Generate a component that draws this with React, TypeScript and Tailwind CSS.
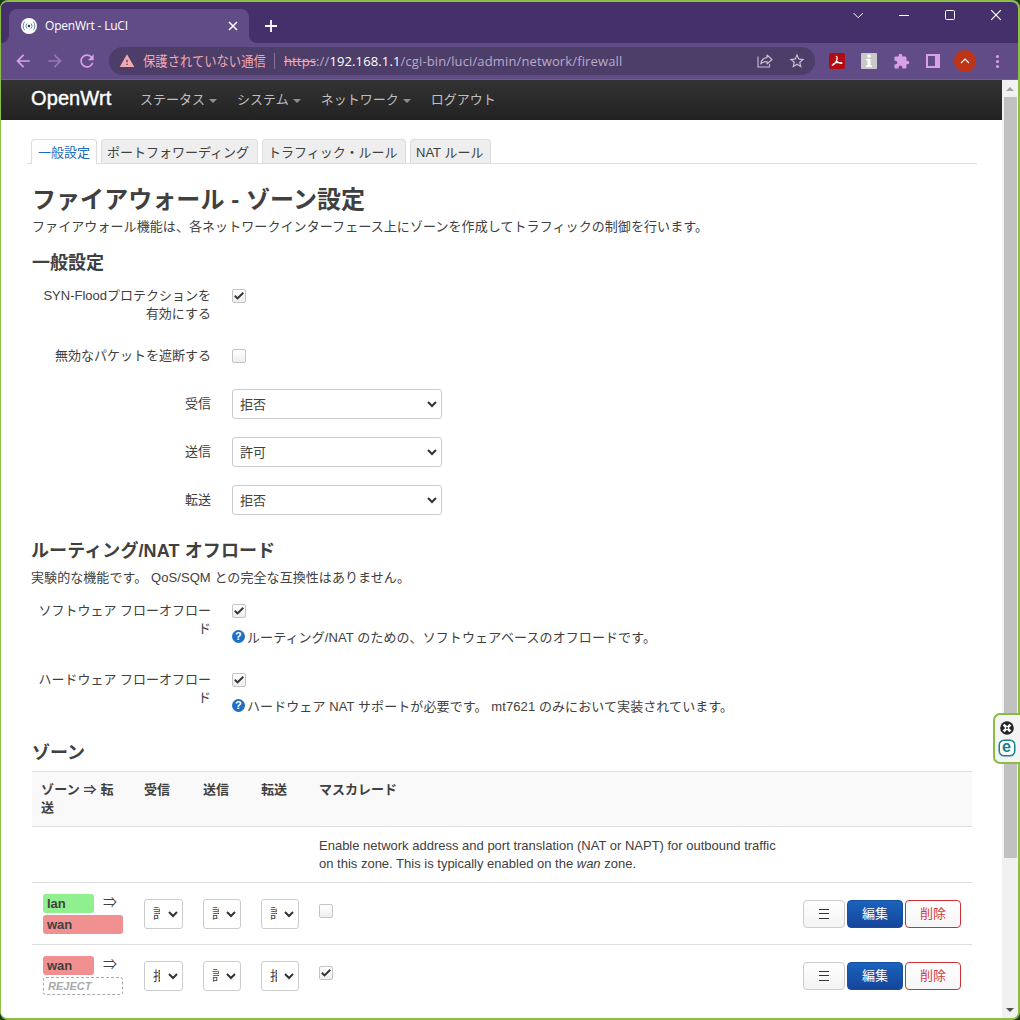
import React from 'react';
import { MdArrowBack, MdArrowForward, MdRefresh, MdWarning, MdStarBorder, MdExtension } from 'react-icons/md';

const page = "font-['Liberation_Sans','Noto_Sans_CJK_JP',sans-serif]";
const chrome = "font-['Open_Sans','Noto_Sans_CJK_JP',sans-serif]";

function Favicon() {
  return (
    <svg width="16" height="16" viewBox="0 0 16 16" fill="none" className="shrink-0">
      <circle cx="8" cy="8" r="8" fill="#fff" />
      <circle cx="8" cy="8" r="1.2" fill="#1f3c55" />
      <g stroke="#5b8c9c" strokeWidth="1" strokeLinecap="round">
        <path d="M5.700 5.800a3.200 3.200 0 0 0 0 4.400M10.300 5.800a3.200 3.200 0 0 1 0 4.400" />
        <path d="M3.500 4a6 6 0 0 0 0 8M12.500 4a6 6 0 0 1 0 8" />
      </g>
    </svg>
  );
}

function TitleBar() {
  return (
    <div className="flex h-[41px] shrink-0 bg-[#46306b]">
      <div className="flex w-[8px] items-end bg-[#624c88]"><div className="h-full w-full rounded-br-[8px] bg-[#46306b]" /></div>
      <div className="mt-[7px] flex h-[34px] w-[240px] items-center rounded-t-[8px] bg-[#624c88] pl-[12px]">
        <Favicon />
        <span className="ml-[8px] w-[183px] text-[12px] leading-[16px] tracking-[-0.2px] whitespace-nowrap text-white">OpenWrt - LuCI</span>
        <svg width="10" height="10" viewBox="0 0 10 10" stroke="#fff" strokeWidth="1.5"><path d="M1 1l8 8M9 1l-8 8" /></svg>
      </div>
      <div className="w-[8px] bg-[#624c88]"><div className="h-full w-full rounded-bl-[8px] bg-[#46306b]" /></div>
      <svg className="mt-[18px] ml-[8px]" width="12" height="12" viewBox="0 0 12 12" stroke="#fff" strokeWidth="1.8"><path d="M6 0v12M0 6h12" /></svg>
      <div className="mt-[7px] mr-[16px] ml-auto flex h-[12px] items-center text-white">
        <svg width="12" height="12" viewBox="0 0 12 12" fill="none" stroke="currentColor" className="mr-[34px]"><path d="M1.500 4l4.700 4.700L11 4" /></svg>
        <svg width="12" height="12" viewBox="0 0 12 12" fill="none" stroke="currentColor" className="mr-[34px]"><path d="M1 6.500h10" /></svg>
        <svg width="12" height="12" viewBox="0 0 12 12" fill="none" stroke="currentColor" className="mr-[34px]"><rect x="1.500" y="1.500" width="9" height="9" rx="1.200" /></svg>
        <svg width="12" height="12" viewBox="0 0 12 12" fill="none" stroke="currentColor" strokeWidth="1.200"><path d="M1.200 1.200l9.600 9.600M10.800 1.200l-9.600 9.600" /></svg>
      </div>
    </div>
  );
}

function Toolbar() {
  return (
    <div className="flex h-[37px] shrink-0 items-center border-b border-[#755b9e] bg-[#624c88] pl-[12px] text-[#d9a0ea]">
      <MdArrowBack size={20} />
      <MdArrowForward size={20} className="ml-[12px] text-[#9c74b6]" />
      <MdRefresh size={20} className="ml-[12px]" />
      <div className="ml-[12px] flex h-[28px] w-[706px] items-center rounded-full bg-[#4c3d69] pl-[10px] text-[#f5a8ae]">
        <MdWarning size={16} />
        <span className="ml-[8px] w-[123px] text-[14px] leading-[20px] whitespace-nowrap">
          <span className="inline-block origin-left scale-x-[0.88]">保護されていない通信</span>
        </span>
        <span className="ml-[8px] h-[16px] w-px bg-[#85719b]" />
        <span className="ml-[9px] text-[13px] leading-[20px] tracking-[0.13px] whitespace-nowrap text-[#b9abc9]">
          <span className="text-[#f5a8ae] line-through">https</span>://<span className="text-white">192.168.1.1</span>/cgi-bin/luci/admin/network/firewall
        </span>
        <svg width="16" height="16" viewBox="0 0 16 16" fill="none" stroke="#cbbfd4" strokeWidth="1.100" strokeLinejoin="round" className="ml-auto">
          <path d="M1 3.500V14h11.500V11" />
          <path d="M10 2l5 4.500-5 4.500V8.500C7 8.500 5.300 9.300 3.800 11 4.200 7.300 6.300 5 10 4.600z" />
        </svg>
        <MdStarBorder size={18} className="mr-[9px] ml-[15px] text-[#cbbfd4]" />
      </div>
      <svg width="16" height="16" viewBox="0 0 16 16" className="ml-[14px]">
        <rect width="16" height="16" rx="2" fill="#b30b12" />
        <path d="M7.300 3.300c1.100 0 .9 2.500.3 4.300M7.600 7.600C6.600 9.800 5 12.300 3.300 12M7.600 8.200c1 1.400 2.600 2.200 5.300 2M4.500 10.800c1.500-1.100 4.500-1.900 8.300-.9" fill="none" stroke="#fff" strokeWidth="1.300" strokeLinecap="round" />
      </svg>
      <span className="ml-[16px] flex h-[16px] w-[16px] items-center justify-center rounded-[1px] bg-[#c9c9c9]">
        <svg width="8" height="14" viewBox="0 0 8 14" fill="#fff"><circle cx="4" cy="2" r="1.800" /><path d="M1 5h4.500v6.500H7V13H1v-1.500h1.500v-5H1z" /></svg>
      </span>
      <MdExtension size={17} className="ml-[16px]" />
      <svg width="14" height="14" viewBox="0 0 14 14" className="ml-[16px]"><path fillRule="evenodd" d="M0 0h14v14H0zM2 2v10h7V2z" fill="currentColor" /></svg>
      <span className="ml-[14px] flex h-[22px] w-[22px] items-center justify-center rounded-full bg-[#bd3519]">
        <svg width="10" height="8" viewBox="0 0 10 8" fill="none" stroke="#fff" strokeWidth="1.100"><path d="M1 6l4-4 4 4" /></svg>
      </span>
      <span className="ml-[20px] flex flex-col gap-[2px]">
        <i className="h-[3px] w-[3px] rounded-full bg-current" /><i className="h-[3px] w-[3px] rounded-full bg-current" /><i className="h-[3px] w-[3px] rounded-full bg-current" />
      </span>
    </div>
  );
}

function MenuItem({ label, caret = true }: { label: string; caret?: boolean }) {
  return (
    <span className="flex items-center text-[13px] leading-[18px] text-[#bfbfbf]">
      {label}
      {caret && <i className="mt-[1px] ml-[4px] border-x-4 border-t-4 border-x-transparent border-t-[#8f8f8f]" />}
    </span>
  );
}

function Check({ on = false }: { on?: boolean }) {
  return (
    <span className="flex h-[14px] w-[14px] items-center justify-center rounded-[2px] border border-[#c4c4c4] bg-gradient-to-b from-white to-[#eee]">
      {on && <svg width="12" height="12" viewBox="0 0 12 12" fill="none" stroke="#333" strokeWidth="1.900"><path d="M1.800 5.800l2.700 2.600L10.300 2.700" /></svg>}
    </span>
  );
}

function Chevron() {
  return <svg width="10" height="7" viewBox="0 0 10 7" fill="none" stroke="#333" strokeWidth="2" className="shrink-0"><path d="M1 1l4 4 4-4" /></svg>;
}

function Select({ value }: { value: string }) {
  return (
    <div className="flex h-[30px] w-[210px] items-center justify-between rounded-[3px] border border-[#ccc] pr-[4px] pl-[7px]">
      <span className="pt-px">{value}</span><Chevron />
    </div>
  );
}

function MiniSelect({ value, width }: { value: string; width: string }) {
  return (
    <div className={`flex h-[30px] items-center justify-between rounded-[3px] border border-[#ccc] pr-[4px] pl-[8px] ${width}`}>
      <span className="w-[7px] overflow-hidden whitespace-nowrap">{value}</span><Chevron />
    </div>
  );
}

function Field({ label, height, children }: { label: React.ReactNode; height: string; children: React.ReactNode }) {
  return (
    <div className={`flex ${height}`}>
      <div className="w-[180px] shrink-0 pt-px pr-px text-right whitespace-nowrap">{label}</div>
      <div className="ml-[20px]">{children}</div>
    </div>
  );
}

function Help({ children }: { children: React.ReactNode }) {
  return (
    <div className="mt-[11px] flex h-[18px] items-center tracking-[0.09px] whitespace-nowrap">
      <span className="mt-[-3px] mr-[2px] flex h-[13px] w-[13px] items-center justify-center rounded-full bg-[#1f6fc4] text-[11px] leading-[13px] font-bold text-white">?</span>
      {children}
    </div>
  );
}

const cols = 'grid grid-cols-[103px_59px_58px_58px_484px_1fr] pl-[9px]';

function Zone({ name, tone, target, modes, masq, last }: { name: string; tone: string; target: React.ReactNode; modes: string[]; masq?: boolean; last?: boolean }) {
  return (
    <div className={`${cols} ${last ? 'h-[73px] pt-[11px]' : 'h-[62px] border-b border-[#ddd] pt-[11px]'}`}>
      <div className="ml-[2px] w-[80px]">
        <div className="flex">
          <b className={`h-[19px] w-[51px] rounded-[3px] pl-[4px] leading-[19px] ${tone}`}>{name}</b>
          <span className="ml-[9px] text-[14px] leading-[16px]">⇒</span>
        </div>
        {target}
      </div>
      {modes.map((m, i) => <div key={i} className="mt-[5px]"><MiniSelect value={m} width={i === 0 ? 'w-[39px]' : 'w-[38px]'} /></div>)}
      <div className="mt-[10px]"><Check on={masq} /></div>
      <div className="mt-[6px] flex gap-[2px] leading-[26px]">
        <div className="flex h-[28px] w-[42px] items-center justify-center rounded-[4px] border border-[#ccc] bg-gradient-to-b from-white to-[#f3f3f3]">
          <svg width="10" height="10" viewBox="0 0 10 10" stroke="#333"><path d="M0 .5h10M0 4.500h10M0 9.500h10" /></svg>
        </div>
        <div className="h-[28px] w-[56px] rounded-[4px] border border-[#174ea0] bg-gradient-to-b from-[#1a63bd] to-[#16459a] text-center text-white">編集</div>
        <div className="h-[28px] w-[56px] rounded-[4px] border border-[#d12f36] bg-gradient-to-b from-white to-[#f6f6f6] text-center text-[#d9383e]">削除</div>
      </div>
    </div>
  );
}

function Content() {
  const tab = 'h-[24px] rounded-t-[4px] border border-b-0 border-[#ddd] pl-[5px] leading-[25px] whitespace-nowrap';
  return (
    <div className="min-w-0 flex-1 bg-white text-[13px] leading-[18px] text-[#404040]">
      <div className="flex h-[40px] bg-gradient-to-b from-[#333] to-[#222] pl-[30px]">
        <span className="mt-[5px] w-[109px] text-[20px] leading-[26px] tracking-[0.1px] text-white [-webkit-text-stroke:0.4px_white]">OpenWrt</span>
        <div className="flex h-[40px] items-center gap-[20px]">
          <MenuItem label="ステータス" /><MenuItem label="システム" /><MenuItem label="ネットワーク" /><MenuItem label="ログアウト" caret={false} />
        </div>
      </div>
      <div className="mt-[19px] ml-[26px] flex h-[25px] w-[950px] gap-[4px] border-b border-[#ddd] pl-[4px]">
        <div className="h-[25px] w-[66px] rounded-t-[4px] border border-b-0 border-[#ddd] bg-white pl-[6px] leading-[25px] whitespace-nowrap text-[#1c6abb]">一般設定</div>
        <div className={`${tab} w-[157px] bg-[#eee]`}>ポートフォワーディング</div>
        <div className={`${tab} w-[144px] bg-[#eee]`}>トラフィック・ルール</div>
        <div className={`${tab} w-[81px] bg-[#eee]`}>NAT ルール</div>
      </div>
      <div className="ml-[31px] w-[940px] pt-[18px]">
        <h2 className="h-[36px] text-[24px] leading-[36px] font-bold tracking-[0.06px]">ファイアウォール - ゾーン設定</h2>
        <p className="h-[18px] tracking-[0.08px]">ファイアウォール機能は、各ネットワークインターフェース上にゾーンを作成してトラフィックの制御を行います。</p>
        <h3 className="mt-[9px] mb-[5px] h-[36px] text-[18px] leading-[36px] font-bold">一般設定</h3>
        <Field height="h-[60px]" label={<>SYN-Floodプロテクションを<br />有効にする</>}><div className="pt-[3px]"><Check on /></div></Field>
        <Field height="h-[43px]" label="無効なパケットを遮断する"><div className="pt-[3px]"><Check /></div></Field>
        <Field height="h-[48px]" label={<div className="pt-[5px]">受信</div>}><Select value="拒否" /></Field>
        <Field height="h-[48px]" label={<div className="pt-[5px]">送信</div>}><Select value="許可" /></Field>
        <Field height="h-[48px]" label={<div className="pt-[5px]">転送</div>}><Select value="拒否" /></Field>
        <h3 className="-ml-px h-[36px] text-[18px] leading-[36px] font-bold tracking-[0.1px]">ルーティング/NAT オフロード</h3>
        <p className="mb-[14px] -ml-px h-[18px] tracking-[0.07px]">実験的な機能です。 QoS/SQM との完全な互換性はありません。</p>
        <Field height="h-[69px]" label={<>ソフトウェア フローオフロー<br />ド</>}><div className="pt-[3px]"><Check on /><Help>ルーティング/NAT のための、ソフトウェアベースのオフロードです。</Help></div></Field>
        <Field height="h-[65px]" label={<>ハードウェア フローオフロー<br />ド</>}><div className="pt-[3px]"><Check on /><Help>ハードウェア NAT サポートが必要です。 mt7621 のみにおいて実装されています。</Help></div></Field>
        <h3 className="h-[36px] text-[18px] leading-[36px] font-bold">ゾーン</h3>
        <div>
          <div className={`${cols} h-[56px] border-y border-[#ddd] bg-[#f9f9f9] pt-[9px] font-bold`}>
            <span className="tracking-[0.15px]">ゾーン ⇒ 転<br />送</span><span>受信</span><span>送信</span><span>転送</span><span>マスカレード</span>
          </div>
          <div className={`${cols} h-[56px] border-b border-[#ddd] pt-[10px]`}>
            <p className="col-start-5">Enable network address and port translation (NAT or NAPT) for outbound traffic<br />on this zone. This is typically enabled on the <em>wan</em> zone.</p>
          </div>
          <Zone name="lan" tone="bg-[#90f090]" modes={['許可', '許可', '許可']}
            target={<b className="mt-[2px] block h-[19px] rounded-[3px] bg-[#f09090] pl-[4px] leading-[19px]">wan</b>} />
          <Zone name="wan" tone="bg-[#f09090]" modes={['拒否', '許可', '拒否']} masq last
            target={<b className="mt-[2px] block h-[18px] rounded-[3px] border border-dashed border-[#aaa] pl-[4px] text-[11px] leading-[17px] text-[#aaa] italic">REJECT</b>} />
        </div>
      </div>
    </div>
  );
}

function Scrollbar() {
  return (
    <div className="flex w-[16px] shrink-0 flex-col items-center bg-[#f1f1f1]">
      <i className="mt-[7px] border-x-4 border-b-4 border-x-transparent border-b-[#a3a3a3]" />
      <div className="mt-[6px] ml-[1px] h-[761px] w-[13px] bg-[#c1c1c1]" />
      <i className="mt-auto mb-[6px] border-x-4 border-t-4 border-x-transparent border-t-[#505050]" />
    </div>
  );
}

function SideWidget() {
  return (
    <div className="absolute top-[713px] right-0 flex h-[51px] w-[27px] flex-col items-center gap-[5px] rounded-l-[7px] border-2 border-r-0 border-[#8bbb45] bg-[#f4f4f4] pt-[6px] pr-[2px]">
      <svg width="14" height="14" viewBox="0 0 14 14"><circle cx="7" cy="7" r="6.800" fill="#262626" /><path d="M3.600 3.600l6.800 6.800M10.400 3.600l-6.800 6.800" stroke="#fff" strokeWidth="2.600" /><circle cx="7" cy="7" r="1" fill="#262626" /></svg>
      <span className="flex h-[16px] w-[16px] shrink-0 items-center justify-center rounded-[5px] border border-[#16808c] bg-white text-[#16808c] ring-[0.5px] ring-[#16808c]">
        <span className="-mt-[3px] font-['Liberation_Sans',sans-serif] text-[16px] leading-[14px] font-bold">e</span>
      </span>
    </div>
  );
}

export default function App() {
  return (
    <div className="relative h-[1020px] w-[1020px] overflow-hidden bg-[#1c3a1c]">
      <div className="flex h-[1020px] flex-col overflow-hidden rounded-[8px] border-2 border-l border-[#8cc044] bg-white">
        <div className={chrome}><TitleBar /><Toolbar /></div>
        <div className={`flex min-h-0 flex-1 overflow-hidden ${page}`}><Content /><Scrollbar /></div>
      </div>
      <SideWidget />
    </div>
  );
}
